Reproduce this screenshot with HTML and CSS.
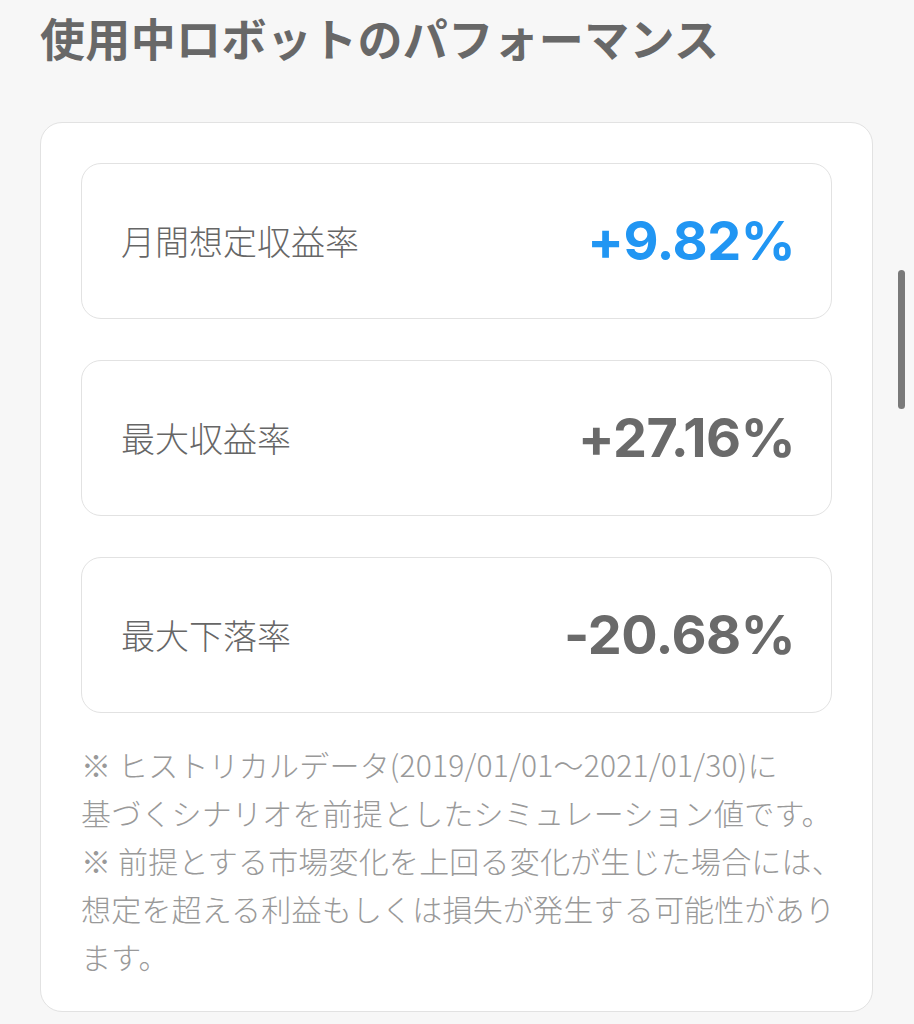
FILE: index.html
```html
<!DOCTYPE html>
<html lang="ja">
<head>
<meta charset="utf-8">
<title>使用中ロボットのパフォーマンス</title>
<link rel="stylesheet" href="styles.css">
</head>
<body>
<div class="page">
  <h1 class="title">使用中ロボットのパフォーマンス</h1>
  <section class="panel">
    <div class="stats">
      <div class="stat">
        <span class="stat-label">月間想定収益率</span>
        <span class="stat-value stat-value--blue">+9.82%</span>
      </div>
      <div class="stat">
        <span class="stat-label">最大収益率</span>
        <span class="stat-value">+27.16%</span>
      </div>
      <div class="stat">
        <span class="stat-label">最大下落率</span>
        <span class="stat-value">-20.68%</span>
      </div>
    </div>
    <div class="notes">
      <p class="note">※ ヒストリカルデータ(2019/01/01〜2021/01/30)に<br>基づくシナリオを前提としたシミュレーション値です。</p>
      <p class="note">※ 前提とする市場変化を上回る変化が生じた場合には、<br>想定を超える利益もしくは損失が発生する可能性があり<br>ます。</p>
    </div>
  </section>
  <div class="scrollbar"></div>
</div>
</body>
</html>
```
FILE: styles.css
```css
html, body {
  margin: 0;
  padding: 0;
  background: #f7f7f7;
}
body {
  font-family: "Noto Sans CJK JP", "Noto Sans", sans-serif;
  color: #666;
}
.page {
  position: relative;
  width: 914px;
  height: 1024px;
  overflow: hidden;
  padding-top: 10px;
  box-sizing: border-box;
}
.title {
  margin: 0 40px;
  font-size: 45px;
  line-height: 56px;
  font-weight: 700;
  color: #686868;
  letter-spacing: 0.35px;
  white-space: nowrap;
}
.panel {
  margin: 56px 41px 0 40px;
  background: #fff;
  border: 1px solid #e2e2e2;
  border-radius: 22px;
  padding: 40px 40px 31px 40px;
}
.stats {
  display: flex;
  flex-direction: column;
  gap: 41px;
}
.stat {
  height: 156px;
  box-sizing: border-box;
  border: 1px solid #e2e2e2;
  border-radius: 20px;
  display: flex;
  align-items: center;
  justify-content: space-between;
  padding: 0 36px 0 39px;
}
.stat-label {
  font-size: 34px;
  font-weight: 300;
  color: #666;
  line-height: 1;
}
.stat-value {
  font-family: Inter, Roboto, "Liberation Sans", sans-serif;
  font-size: 54px;
  font-weight: 700;
  color: #6a6a6a;
  letter-spacing: -0.5px;
  line-height: 1;
}
.stat-value--blue {
  color: #2196f3;
}
.notes {
  margin-top: 27px;
}
.note {
  margin: 0;
  font-size: 30px;
  line-height: 48px;
  letter-spacing: 0.2px;
  font-weight: 300;
  color: #999;
  white-space: nowrap;
}
.scrollbar {
  position: absolute;
  left: 898px;
  top: 270px;
  width: 7px;
  height: 139px;
  border-radius: 4px;
  background: #7a7a7a;
}
```
